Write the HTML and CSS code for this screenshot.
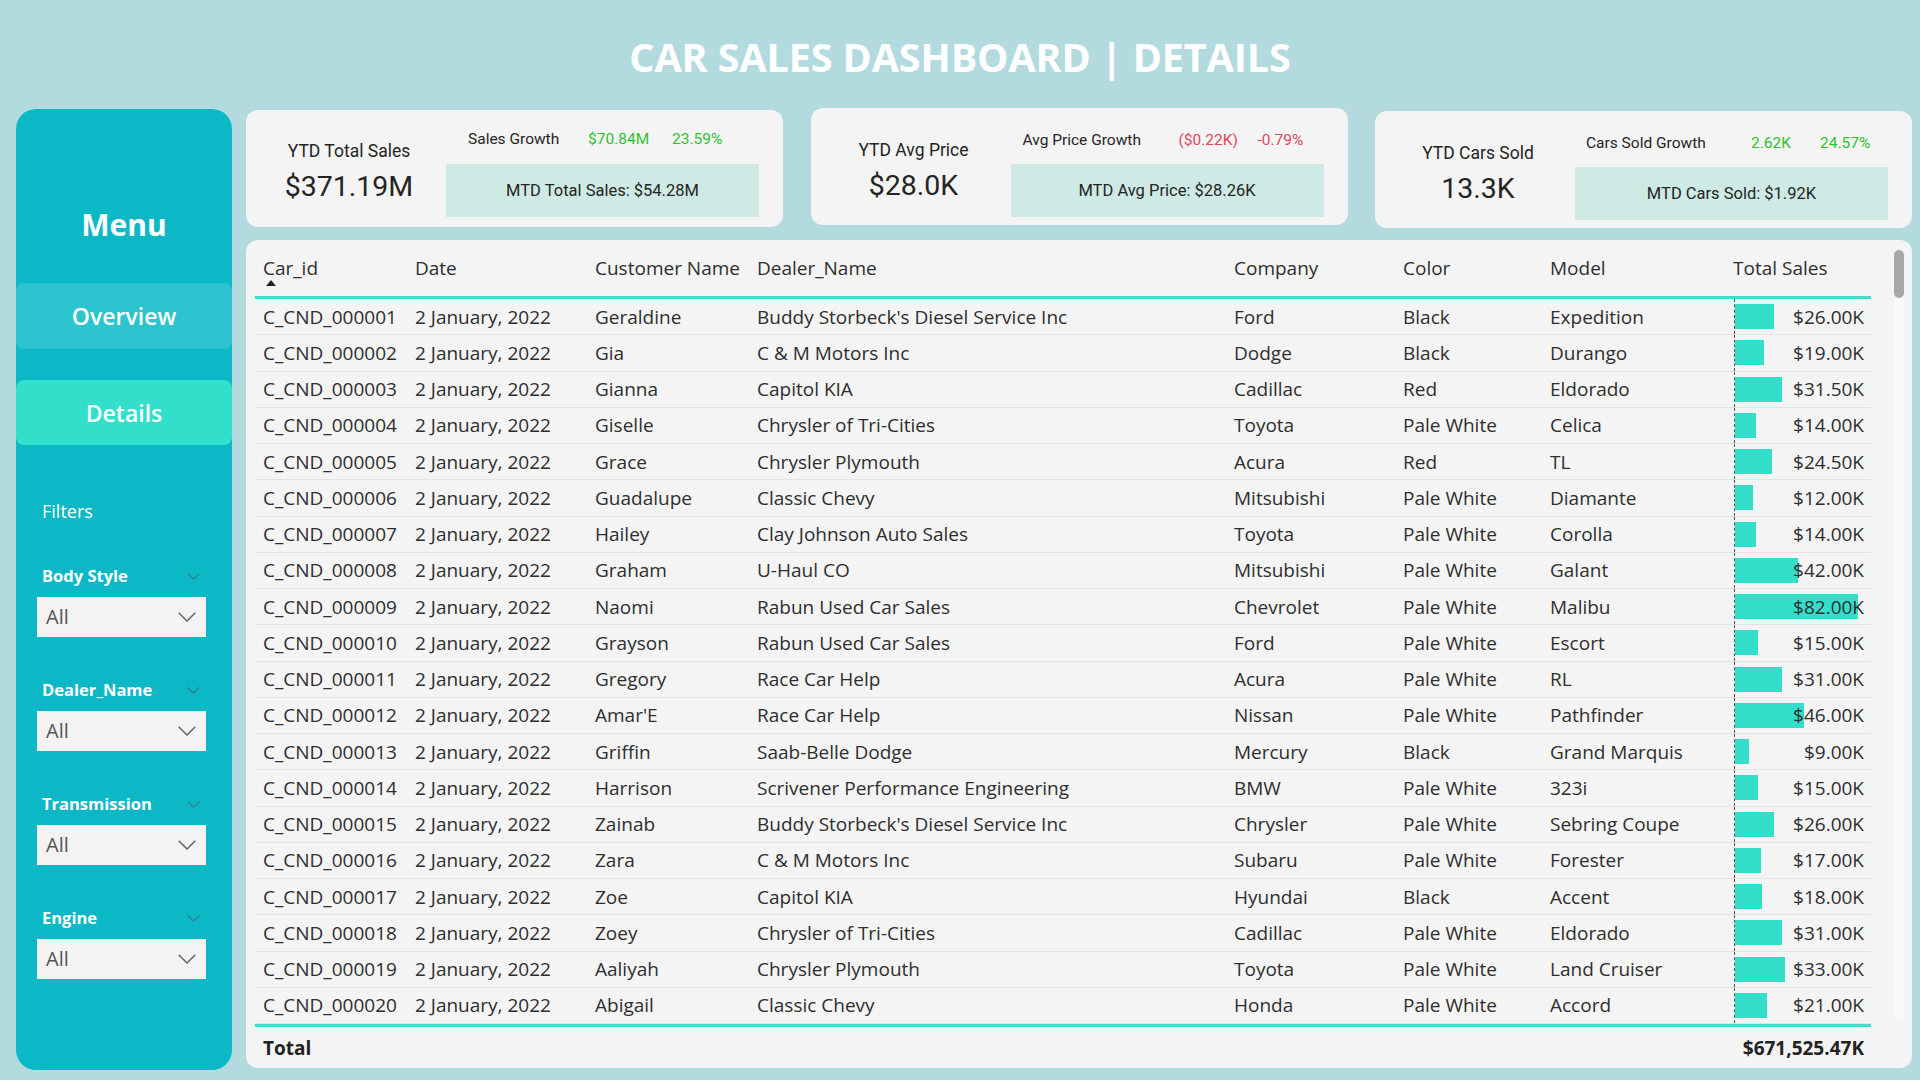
FILE: index.html
```html
<!DOCTYPE html>
<html lang="en">
<head>
<meta charset="utf-8">
<title>Car Sales Dashboard | Details</title>
<link rel="stylesheet" href="styles.css">
</head>
<body>
<h1 class="title">CAR SALES DASHBOARD | DETAILS</h1>
<div class="app">
  <aside class="sidebar">
    <div class="menu-title">Menu</div>
    <div class="nav-btn overview">Overview</div>
    <div class="nav-btn details">Details</div>
    <div class="filters-title">Filters</div>
    <div class="filter">
      <div class="filter-label"><span>Body Style</span><svg class="lchev" width="13" height="7" viewBox="0 0 13 7"><polyline points="0.5,0.5 6.5,6 12.5,0.5"/></svg></div>
      <div class="dropdown"><span>All</span><svg class="dchev" width="18" height="10" viewBox="0 0 18 10"><polyline points="0.7,0.7 9,9 17.3,0.7"/></svg></div>
    </div>
    <div class="filter">
      <div class="filter-label"><span>Dealer_Name</span><svg class="lchev" width="13" height="7" viewBox="0 0 13 7"><polyline points="0.5,0.5 6.5,6 12.5,0.5"/></svg></div>
      <div class="dropdown"><span>All</span><svg class="dchev" width="18" height="10" viewBox="0 0 18 10"><polyline points="0.7,0.7 9,9 17.3,0.7"/></svg></div>
    </div>
    <div class="filter">
      <div class="filter-label"><span>Transmission</span><svg class="lchev" width="13" height="7" viewBox="0 0 13 7"><polyline points="0.5,0.5 6.5,6 12.5,0.5"/></svg></div>
      <div class="dropdown"><span>All</span><svg class="dchev" width="18" height="10" viewBox="0 0 18 10"><polyline points="0.7,0.7 9,9 17.3,0.7"/></svg></div>
    </div>
    <div class="filter">
      <div class="filter-label"><span>Engine</span><svg class="lchev" width="13" height="7" viewBox="0 0 13 7"><polyline points="0.5,0.5 6.5,6 12.5,0.5"/></svg></div>
      <div class="dropdown"><span>All</span><svg class="dchev" width="18" height="10" viewBox="0 0 18 10"><polyline points="0.7,0.7 9,9 17.3,0.7"/></svg></div>
    </div>
  </aside>

  <main class="content">
    <section class="kpis">
      <div class="kpi k1">
        <div class="kpi-main">
          <div class="kpi-label">YTD Total Sales</div>
          <div class="kpi-value">$371.19M</div>
        </div>
        <div class="kpi-side">
          <div class="growth g1"><span>Sales Growth</span><span class="pos">$70.84M</span><span class="pos">23.59%</span></div>
          <div class="mtd">MTD Total Sales: $54.28M</div>
        </div>
      </div>
      <div class="kpi k2">
        <div class="kpi-main">
          <div class="kpi-label">YTD Avg Price</div>
          <div class="kpi-value">$28.0K</div>
        </div>
        <div class="kpi-side">
          <div class="growth g2"><span>Avg Price Growth</span><span class="neg">($0.22K)</span><span class="neg">-0.79%</span></div>
          <div class="mtd">MTD Avg Price: $28.26K</div>
        </div>
      </div>
      <div class="kpi k3">
        <div class="kpi-main">
          <div class="kpi-label">YTD Cars Sold</div>
          <div class="kpi-value">13.3K</div>
        </div>
        <div class="kpi-side">
          <div class="growth g3"><span>Cars Sold Growth</span><span class="pos">2.62K</span><span class="pos">24.57%</span></div>
          <div class="mtd">MTD Cars Sold: $1.92K</div>
        </div>
      </div>
    </section>

    <section class="table-card">
      <div class="table">
        <div class="row head">
          <div class="cell sortable">Car_id<span class="sort"></span></div>
          <div class="cell">Date</div>
          <div class="cell">Customer Name</div>
          <div class="cell">Dealer_Name</div>
          <div class="cell">Company</div>
          <div class="cell">Color</div>
          <div class="cell">Model</div>
          <div class="cell">Total Sales</div>
        </div>

        <div class="row"><div class="cell">C_CND_000001</div><div class="cell">2 January, 2022</div><div class="cell">Geraldine</div><div class="cell">Buddy Storbeck's Diesel Service Inc</div><div class="cell">Ford</div><div class="cell">Black</div><div class="cell">Expedition</div><div class="sales"><div class="axis"><div class="bar" style="width:39px"></div><div class="val">$26.00K</div></div></div></div>
        <div class="row"><div class="cell">C_CND_000002</div><div class="cell">2 January, 2022</div><div class="cell">Gia</div><div class="cell">C &amp; M Motors Inc</div><div class="cell">Dodge</div><div class="cell">Black</div><div class="cell">Durango</div><div class="sales"><div class="axis"><div class="bar" style="width:28.5px"></div><div class="val">$19.00K</div></div></div></div>
        <div class="row"><div class="cell">C_CND_000003</div><div class="cell">2 January, 2022</div><div class="cell">Gianna</div><div class="cell">Capitol KIA</div><div class="cell">Cadillac</div><div class="cell">Red</div><div class="cell">Eldorado</div><div class="sales"><div class="axis"><div class="bar" style="width:47.25px"></div><div class="val">$31.50K</div></div></div></div>
        <div class="row"><div class="cell">C_CND_000004</div><div class="cell">2 January, 2022</div><div class="cell">Giselle</div><div class="cell">Chrysler of Tri-Cities</div><div class="cell">Toyota</div><div class="cell">Pale White</div><div class="cell">Celica</div><div class="sales"><div class="axis"><div class="bar" style="width:21px"></div><div class="val">$14.00K</div></div></div></div>
        <div class="row"><div class="cell">C_CND_000005</div><div class="cell">2 January, 2022</div><div class="cell">Grace</div><div class="cell">Chrysler Plymouth</div><div class="cell">Acura</div><div class="cell">Red</div><div class="cell">TL</div><div class="sales"><div class="axis"><div class="bar" style="width:36.75px"></div><div class="val">$24.50K</div></div></div></div>
        <div class="row"><div class="cell">C_CND_000006</div><div class="cell">2 January, 2022</div><div class="cell">Guadalupe</div><div class="cell">Classic Chevy</div><div class="cell">Mitsubishi</div><div class="cell">Pale White</div><div class="cell">Diamante</div><div class="sales"><div class="axis"><div class="bar" style="width:18px"></div><div class="val">$12.00K</div></div></div></div>
        <div class="row"><div class="cell">C_CND_000007</div><div class="cell">2 January, 2022</div><div class="cell">Hailey</div><div class="cell">Clay Johnson Auto Sales</div><div class="cell">Toyota</div><div class="cell">Pale White</div><div class="cell">Corolla</div><div class="sales"><div class="axis"><div class="bar" style="width:21px"></div><div class="val">$14.00K</div></div></div></div>
        <div class="row"><div class="cell">C_CND_000008</div><div class="cell">2 January, 2022</div><div class="cell">Graham</div><div class="cell">U-Haul CO</div><div class="cell">Mitsubishi</div><div class="cell">Pale White</div><div class="cell">Galant</div><div class="sales"><div class="axis"><div class="bar" style="width:63px"></div><div class="val">$42.00K</div></div></div></div>
        <div class="row"><div class="cell">C_CND_000009</div><div class="cell">2 January, 2022</div><div class="cell">Naomi</div><div class="cell">Rabun Used Car Sales</div><div class="cell">Chevrolet</div><div class="cell">Pale White</div><div class="cell">Malibu</div><div class="sales"><div class="axis"><div class="bar" style="width:123px"></div><div class="val">$82.00K</div></div></div></div>
        <div class="row"><div class="cell">C_CND_000010</div><div class="cell">2 January, 2022</div><div class="cell">Grayson</div><div class="cell">Rabun Used Car Sales</div><div class="cell">Ford</div><div class="cell">Pale White</div><div class="cell">Escort</div><div class="sales"><div class="axis"><div class="bar" style="width:22.5px"></div><div class="val">$15.00K</div></div></div></div>
        <div class="row"><div class="cell">C_CND_000011</div><div class="cell">2 January, 2022</div><div class="cell">Gregory</div><div class="cell">Race Car Help</div><div class="cell">Acura</div><div class="cell">Pale White</div><div class="cell">RL</div><div class="sales"><div class="axis"><div class="bar" style="width:46.5px"></div><div class="val">$31.00K</div></div></div></div>
        <div class="row"><div class="cell">C_CND_000012</div><div class="cell">2 January, 2022</div><div class="cell">Amar'E</div><div class="cell">Race Car Help</div><div class="cell">Nissan</div><div class="cell">Pale White</div><div class="cell">Pathfinder</div><div class="sales"><div class="axis"><div class="bar" style="width:69px"></div><div class="val">$46.00K</div></div></div></div>
        <div class="row"><div class="cell">C_CND_000013</div><div class="cell">2 January, 2022</div><div class="cell">Griffin</div><div class="cell">Saab-Belle Dodge</div><div class="cell">Mercury</div><div class="cell">Black</div><div class="cell">Grand Marquis</div><div class="sales"><div class="axis"><div class="bar" style="width:13.5px"></div><div class="val">$9.00K</div></div></div></div>
        <div class="row"><div class="cell">C_CND_000014</div><div class="cell">2 January, 2022</div><div class="cell">Harrison</div><div class="cell">Scrivener Performance Engineering</div><div class="cell">BMW</div><div class="cell">Pale White</div><div class="cell">323i</div><div class="sales"><div class="axis"><div class="bar" style="width:22.5px"></div><div class="val">$15.00K</div></div></div></div>
        <div class="row"><div class="cell">C_CND_000015</div><div class="cell">2 January, 2022</div><div class="cell">Zainab</div><div class="cell">Buddy Storbeck's Diesel Service Inc</div><div class="cell">Chrysler</div><div class="cell">Pale White</div><div class="cell">Sebring Coupe</div><div class="sales"><div class="axis"><div class="bar" style="width:39px"></div><div class="val">$26.00K</div></div></div></div>
        <div class="row"><div class="cell">C_CND_000016</div><div class="cell">2 January, 2022</div><div class="cell">Zara</div><div class="cell">C &amp; M Motors Inc</div><div class="cell">Subaru</div><div class="cell">Pale White</div><div class="cell">Forester</div><div class="sales"><div class="axis"><div class="bar" style="width:25.5px"></div><div class="val">$17.00K</div></div></div></div>
        <div class="row"><div class="cell">C_CND_000017</div><div class="cell">2 January, 2022</div><div class="cell">Zoe</div><div class="cell">Capitol KIA</div><div class="cell">Hyundai</div><div class="cell">Black</div><div class="cell">Accent</div><div class="sales"><div class="axis"><div class="bar" style="width:27px"></div><div class="val">$18.00K</div></div></div></div>
        <div class="row"><div class="cell">C_CND_000018</div><div class="cell">2 January, 2022</div><div class="cell">Zoey</div><div class="cell">Chrysler of Tri-Cities</div><div class="cell">Cadillac</div><div class="cell">Pale White</div><div class="cell">Eldorado</div><div class="sales"><div class="axis"><div class="bar" style="width:46.5px"></div><div class="val">$31.00K</div></div></div></div>
        <div class="row"><div class="cell">C_CND_000019</div><div class="cell">2 January, 2022</div><div class="cell">Aaliyah</div><div class="cell">Chrysler Plymouth</div><div class="cell">Toyota</div><div class="cell">Pale White</div><div class="cell">Land Cruiser</div><div class="sales"><div class="axis"><div class="bar" style="width:49.5px"></div><div class="val">$33.00K</div></div></div></div>
        <div class="row"><div class="cell">C_CND_000020</div><div class="cell">2 January, 2022</div><div class="cell">Abigail</div><div class="cell">Classic Chevy</div><div class="cell">Honda</div><div class="cell">Pale White</div><div class="cell">Accord</div><div class="sales"><div class="axis"><div class="bar" style="width:31.5px"></div><div class="val">$21.00K</div></div></div></div>

        <div class="row total">
          <div class="cell">Total</div>
          <div class="cell"></div><div class="cell"></div><div class="cell"></div><div class="cell"></div><div class="cell"></div><div class="cell"></div>
          <div class="cell right">$671,525.47K</div>
        </div>
      </div>
      <div class="scrollbar"><div class="thumb"></div></div>
    </section>
  </main>
</div>
</body>
</html>
```
FILE: styles.css
```css
* { box-sizing: border-box; }

body {
  margin: 0;
  width: 1920px;
  height: 1080px;
  overflow: hidden;
  background: #b3dbdf;
  font-family: "Open Sans", "Noto Sans", sans-serif;
  color: #2b2b2b;
}

.title {
  margin: 0;
  height: 108px;
  padding-top: 6px;
  display: flex;
  align-items: center;
  justify-content: center;
  color: #ffffff;
  font: 700 39.5px/46px "Open Sans", sans-serif;
  letter-spacing: -0.1px;
}

.app {
  display: grid;
  grid-template-columns: 216px 1666px;
  column-gap: 14px;
  padding-left: 16px;
  align-items: start;
}

/* Sidebar */
.sidebar {
  margin-top: 1px;
  height: 961px;
  background: #0db8c6;
  border-radius: 20px;
  display: flex;
  flex-direction: column;
}

.menu-title {
  margin-top: 96px;
  text-align: center;
  color: #fff;
  font: 700 30px/40px "Open Sans", sans-serif;
}

.nav-btn {
  display: flex;
  align-items: center;
  justify-content: center;
  color: #fff;
  font: 600 23px/30px "Open Sans", sans-serif;
  border-radius: 8px;
}

.overview {
  margin-top: 38px;
  height: 66px;
  background: #2cc4cf;
}

.details {
  margin-top: 31px;
  height: 65px;
  background: #31dfca;
}

.filters-title {
  margin: 54px 0 0 26px;
  color: #fff;
  font: 400 18px/24px "Open Sans", sans-serif;
}

.filter {
  margin-top: 42px;
}

.filter-label {
  height: 22px;
  display: flex;
  align-items: center;
  justify-content: space-between;
  padding: 0 32px 0 26px;
  color: #fff;
  font: 700 16.5px/22px "Open Sans", sans-serif;
}

.lchev polyline {
  fill: none;
  stroke: rgba(70, 90, 95, 0.55);
  stroke-width: 1.3;
}

.dropdown {
  margin: 10px 26px 0 21px;
  height: 40px;
  background: #f3f3f3;
  display: flex;
  align-items: center;
  justify-content: space-between;
  padding: 0 10px 0 9px;
  color: #555;
  font: 400 20px/26px "Open Sans", sans-serif;
}

.dchev polyline {
  fill: none;
  stroke: #666;
  stroke-width: 1.5;
}

/* KPI cards */
.content {
  display: flex;
  flex-direction: column;
}

.kpis {
  height: 121px;
  display: flex;
  justify-content: space-between;
  align-items: flex-start;
}

.kpi {
  width: 537px;
  height: 117px;
  background: #f4f4f4;
  border-radius: 12px;
  display: flex;
  color: #252423;
}

.k1 { margin-top: 2px; }
.k2 { margin-top: 0; }
.k3 { margin-top: 3px; }

.kpi-main {
  width: 200px;
  padding: 29px 0 0 6px;
  text-align: center;
}

.k2 .kpi-main { padding-top: 30px; }
.k3 .kpi-main { padding-top: 30px; }

.kpi-label {
  font: 400 17.5px/24px Roboto, sans-serif;
}

.kpi-value {
  margin-top: 6px;
  font: 400 28.5px/36px Roboto, sans-serif;
}

.kpi-side {
  width: 313px;
  padding-top: 18px;
}

.k2 .kpi-side,
.k3 .kpi-side { padding-top: 21px; }

.growth {
  height: 22px;
  display: grid;
  align-items: center;
  font: 400 15.5px/22px Roboto, sans-serif;
  white-space: nowrap;
}

.g1 { grid-template-columns: 120px 84px auto; padding-left: 22px; }
.g2 { grid-template-columns: 156px 79px auto; padding-left: 12px; }
.g3 { grid-template-columns: 165px 69px auto; padding-left: 11px; }

.pos { color: #2fc22f; }
.neg { color: #e2475b; }

.mtd {
  margin-top: 14px;
  height: 53px;
  background: #cdeae4;
  display: flex;
  align-items: center;
  justify-content: center;
  font: 400 16.5px/24px Roboto, sans-serif;
}

.k2 .mtd,
.k3 .mtd { margin-top: 13px; }

/* Table */
.table-card {
  margin-top: 11px;
  height: 828px;
  background: #f4f4f4;
  border-radius: 12px;
  display: flex;
  padding: 10px 8px 0 9px;
}

.table {
  width: 1616px;
  flex: none;
}

.row {
  display: grid;
  grid-template-columns: 152px 180px 162px 477px 169px 147px 183px 146px;
  height: 36.25px;
  border-bottom: 1px solid #e2e2e2;
  font: 400 19px/26px "Open Sans", sans-serif;
  color: #2e2e2e;
}

.cell {
  padding: 0 8px;
  white-space: nowrap;
  overflow: hidden;
  display: flex;
  align-items: center;
}

.row.head {
  height: 49px;
  border-bottom: 3px solid #3fdfcc;
}

.row.head .cell {
  align-items: flex-start;
  padding-top: 5px;
}

.row.head .sortable {
  flex-direction: column;
}

.sort {
  width: 0;
  height: 0;
  margin: -1px 0 0 3px;
  border-left: 5px solid transparent;
  border-right: 5px solid transparent;
  border-bottom: 6px solid #222;
}

.sales {
  padding-right: 7px;
  height: 100%;
}

.axis {
  margin-left: 9px;
  height: 100%;
  border-left: 1px dashed #555;
  display: grid;
  align-items: center;
}

.bar {
  grid-area: 1 / 1;
  justify-self: start;
  height: 25px;
  background: #33dfca;
}

.val {
  grid-area: 1 / 1;
  justify-self: end;
  position: relative;
  white-space: nowrap;
}

.row.total {
  height: 45px;
  border-top: 3px solid #3fdfcc;
  border-bottom: none;
  font-weight: 700;
  color: #222;
}

.row.total .right {
  justify-content: flex-end;
  padding-right: 7px;
}

.scrollbar {
  margin-left: 23px;
  width: 10px;
  height: 770px;
  background: #f9f9f9;
  border-radius: 5px;
}

.thumb {
  width: 10px;
  height: 48px;
  background: #a8a8a8;
  border-radius: 5px;
}
```
